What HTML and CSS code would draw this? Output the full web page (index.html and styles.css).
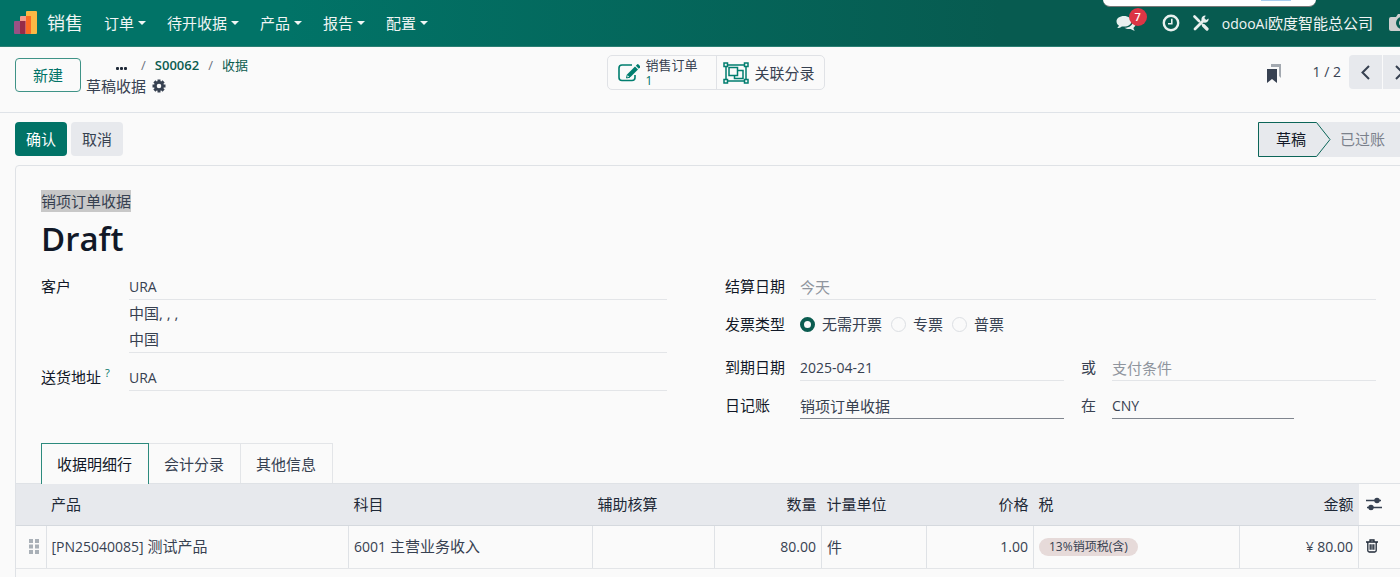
FILE: index.html
```html
<!DOCTYPE html>
<html lang="zh-CN">
<head>
	<meta charset="UTF-8">
	<title>草稿收据</title>
	<link rel="stylesheet" href="styles.css">
</head>
<body>
<div class="popup"><span></span></div>
<div class="client">
	<header class="navbar">
		<svg class="logo" width="24" height="24" viewBox="0 0 24 24">
			<rect x="12" y="0" width="11" height="23" rx="1" fill="#fbb945"/>
			<rect x="6" y="5" width="11" height="18" rx="1" fill="#f59b8c"/>
			<path d="M12 5h5v17q0 1-1 1h-4z" fill="#fc6a23"/>
			<rect x="0" y="10" width="11" height="13" rx="1" fill="#985184"/>
			<path d="M6 10h5.500v13h-4.500q-1 0-1-1z" fill="#962b48"/>
		</svg>
		<a class="app" href="#">销售</a>
		<nav class="menu">
			<button type="button">订单<i class="caret"></i></button>
			<button type="button">待开收据<i class="caret"></i></button>
			<button type="button">产品<i class="caret"></i></button>
			<button type="button">报告<i class="caret"></i></button>
			<button type="button">配置<i class="caret"></i></button>
		</nav>
		<div class="systray">
			<button type="button" class="chat" aria-label="消息">
				<svg width="20" height="17" viewBox="0 0 20 17" fill="#e8f0ee">
					<path d="M8 1c4.300 0 7.500 2.300 7.500 5.300s-3.200 5.300-7.500 5.300c-.8 0-1.500 0-2.200-.2C4.500 12.400 3 13 1.200 13.100c.9-.8 1.500-1.600 1.700-2.500C1.300 9.600.5 8 .5 6.300.5 3.300 3.700 1 8 1z"/>
					<path d="M17 5.500c1.500.9 2.500 2.200 2.500 3.800 0 1.400-.8 2.700-2.100 3.600.2 1 .7 1.800 1.500 2.600-1.700-.1-3.100-.7-4.300-1.600-2.200.4-4.500 0-6.100-1.100 5 0 8.800-2.700 8.500-7.300z"/>
				</svg>
				<span class="badge">7</span>
			</button>
			<button type="button" aria-label="活动">
				<svg width="18" height="18" viewBox="0 0 18 18" fill="none" stroke="#e8f0ee">
					<circle cx="9" cy="9" r="7.200" stroke-width="2.400"/>
					<path d="M9.800 4.800v5H6" stroke-width="1.600"/>
				</svg>
			</button>
			<button type="button" class="tools" aria-label="开发者工具">
				<svg width="16" height="16" viewBox="0 0 16 16" fill="none" stroke="#e8f0ee" stroke-linecap="round">
					<path d="M1.500 1.500l4.500 4.500" stroke-width="2.600"/>
					<path d="M6 6l3.500 3.500" stroke-width="1.400"/>
					<path d="M10.500 10.500l3.500 3.500" stroke-width="3.200"/>
					<path d="M2 14l8.500-8.500" stroke-width="2.800"/>
					<path d="M12.800.700a3.600 3.600 0 1 0 2.700 2.700l-2.300 1.600-1.900-1.900z" fill="#e8f0ee" stroke="none"/>
				</svg>
			</button>
			<a class="company" href="#"><span class="latin">odooAi</span>欧度智能总公司</a>
			<svg class="avatar" width="27" height="20" viewBox="0 0 27 20">
				<path d="M2 4h5l2-3h9l2 3h5q2 0 2 2v10q0 2-2 2H2q-2 0-2-2V6q0-2 2-2z" fill="#cfcfcf"/>
				<circle cx="13" cy="10" r="6" fill="#075b50"/>
				<circle cx="13" cy="10" r="3" fill="#cfcfcf"/>
			</svg>
		</div>
	</header>

	<section class="control-panel">
		<div class="cp-left">
			<button type="button" class="btn btn-outline">新建</button>
			<div class="crumbs">
				<ol>
					<li><a href="#" class="dots" aria-label="更多"><i></i><i></i><i></i></a></li>
					<li><a href="#" class="strong">S00062</a></li>
					<li><a href="#">收据</a></li>
				</ol>
				<div class="current">草稿收据
					<svg width="14" height="14" viewBox="0 0 14 14">
						<g stroke="#374151" stroke-width="3"><path d="M7 .5v13M.5 7h13M2.400 2.400l9.200 9.200M2.400 11.600l9.200-9.200"/></g>
						<circle cx="7" cy="7" r="3.600" fill="#fafafa" stroke="#374151" stroke-width="2.600"/>
					</svg>
				</div>
			</div>
		</div>
		<div class="stats">
			<button type="button" class="stat">
				<svg width="22" height="19" viewBox="0 0 22 19" fill="none" stroke="#017e6f" stroke-width="1.600">
					<path d="M14 2H4Q1 2 1 5v9.500q0 3 3 3h10q3 0 3-3V12"/>
					<path d="M9.500 11l7.500-7.500 3 3-7.500 7.500-3.500.5z" fill="#017e6f" stroke="none"/>
					<path d="M17.800 2.700l1.500-1.500q.5-.5 1 0l2 2q.4.500 0 1l-1.500 1.500z" fill="#017e6f" stroke="none"/>
					<path d="M9.300 11.500l2.700 2.700-3.500.8z" stroke-width="1" fill="#fafafa"/>
				</svg>
				<span class="stat-text"><span>销售订单</span><span class="value">1</span></span>
			</button>
			<button type="button" class="stat stat-wide">
				<svg width="26" height="22" viewBox="0 0 26 22" fill="none" stroke="#017e6f" stroke-width="1.500">
					<path d="M3 3h20v16H3z"/>
					<path d="M6 5.500h8.500v8H6z"/>
					<path d="M15 8.500h5v8h-8.500v-3"/>
					<path d="M1 1h3.500v3.500H1zM21.500 1H25v3.500h-3.500zM1 17.500h3.500V21H1zM21.500 17.500H25V21h-3.500z" fill="#fafafa"/>
				</svg>
				<span>关联分录</span>
			</button>
		</div>
		<div class="cp-right">
			<svg class="bookmark" width="14" height="19" viewBox="0 0 14 19">
				<path d="M4 0h10v14l-2-2V3H4z" fill="#a3a9b0"/>
				<path d="M0 5h10v14l-5-4-5 4z" fill="#374151"/>
			</svg>
			<span class="pager">1 / 2</span>
			<div class="pager-buttons">
				<button type="button" aria-label="上一页"><svg width="9" height="15" viewBox="0 0 9 15"><path d="M8 1L1.500 7.500 8 14"/></svg></button>
				<button type="button" aria-label="下一页"><svg width="9" height="15" viewBox="0 0 9 15"><path d="M1 1l6.500 6.500L1 14"/></svg></button>
			</div>
		</div>
	</section>

	<main>
		<div class="statusbar">
			<button type="button" class="btn btn-primary">确认</button>
			<button type="button" class="btn btn-secondary">取消</button>
			<div class="steps">
				<button type="button" class="step current-step">
					<svg width="73" height="35" viewBox="0 0 73 35"><path d="M.5.500h58L72 17.500 58.500 34.500H.500z" fill="#e7e9ed" stroke="#0b6558"/></svg>
					<span>草稿</span>
				</button>
				<button type="button" class="step">已过账</button>
			</div>
		</div>

		<form class="sheet">
			<div class="sheet-head">
				<span class="selected">销项订单收据</span>
				<h1>Draft</h1>
			</div>

			<div class="groups">
				<div class="group group-left">
					<label for="partner">客户</label>
					<div class="value-cell">
						<input id="partner" class="latin" type="text" value="URA">
						<div class="address">中国, , ,<br>中国</div>
					</div>
					<label for="shipping">送货地址<sup>?</sup></label>
					<input id="shipping" class="latin" type="text" value="URA">
				</div>
				<div class="group group-right">
					<label for="invoice-date">结算日期</label>
					<input id="invoice-date" type="text" placeholder="今天">
					<span class="label">发票类型</span>
					<div class="radios">
						<label><input type="radio" name="type" checked>无需开票</label>
						<label><input type="radio" name="type">专票</label>
						<label><input type="radio" name="type">普票</label>
					</div>
					<label for="due">到期日期</label>
					<div class="pair">
						<input id="due" class="latin" type="text" value="2025-04-21">
						<label for="term">或</label>
						<input id="term" type="text" placeholder="支付条件">
					</div>
					<label for="journal">日记账</label>
					<div class="pair">
						<input id="journal" class="required" type="text" value="销项订单收据">
						<label for="currency">在</label>
						<input id="currency" class="required short latin" type="text" value="CNY">
					</div>
				</div>
			</div>

			<div class="tabs">
				<button type="button" class="active">收据明细行</button>
				<button type="button">会计分录</button>
				<button type="button">其他信息</button>
			</div>

			<table>
				<colgroup>
					<col class="c-handle"><col><col class="c-account"><col class="c-aux"><col class="c-num">
					<col class="c-unit"><col class="c-num"><col class="c-tax"><col class="c-amount"><col class="c-tools">
				</colgroup>
				<thead>
					<tr>
						<th></th>
						<th>产品</th>
						<th>科目</th>
						<th>辅助核算</th>
						<th class="right">数量</th>
						<th>计量单位</th>
						<th class="right">价格</th>
						<th>税</th>
						<th class="right">金额</th>
						<th class="tools-cell">
							<svg width="16" height="14" viewBox="0 0 16 14" fill="#374151" stroke="#374151" stroke-width="1.500">
								<path d="M0 3.500h15M1 10.500h15"/><circle cx="11" cy="3.500" r="2"/><circle cx="5" cy="10.500" r="2"/>
							</svg>
						</th>
					</tr>
				</thead>
				<tbody>
					<tr>
						<td class="handle">
							<svg width="10" height="15" viewBox="0 0 10 15" fill="#a9b0b7">
								<path d="M0 0h4v4H0zM6 0h4v4H6zM0 5.500h4v4H0zM6 5.500h4v4H6zM0 11h4v4H0zM6 11h4v4H6z"/>
							</svg>
						</td>
						<td><span class="latin">[PN25040085]</span> 测试产品</td>
						<td><span class="latin">6001</span> 主营业务收入</td>
						<td></td>
						<td class="right latin">80.00</td>
						<td>件</td>
						<td class="right latin">1.00</td>
						<td><span class="tag">13%销项税(含)</span></td>
						<td class="right latin">¥ 80.00</td>
						<td class="tools-cell">
							<button type="button" aria-label="删除">
								<svg width="12" height="14" viewBox="0 0 12 14" fill="none" stroke="#1f2937" stroke-width="1.300">
									<path d="M0 3h12M4 3V1h4v2M1.800 3v8.500q0 1.500 1.500 1.500h5.400q1.500 0 1.500-1.500V3M4.200 5.300v5.500M6 5.300v5.500M7.800 5.300v5.500"/>
								</svg>
							</button>
						</td>
					</tr>
				</tbody>
			</table>
		</form>
	</main>
</div>
</body>
</html>
```
FILE: styles.css
```css
* {
	box-sizing: border-box;
}

body {
	margin: 0;
	overflow: hidden;
	background: #fafafa;
	color: #374151;
	font: 15px/22px "Open Sans", "Noto Sans CJK SC", sans-serif;
}

button, input {
	font: inherit;
	color: inherit;
}

button {
	margin: 0;
	padding: 0;
	border: 0;
	background: none;
}

a {
	color: #0b5c50;
	text-decoration: none;
}

svg {
	display: block;
	flex: none;
}

/* the client runs a little past the right edge of the window */
.client {
	width: calc(100% + 31px);
}

.latin {
	font-size: 14px;
}

.popup {
	position: absolute;
	top: 0;
	right: 84px;
	width: 213px;
	height: 7px;
	background: #fff;
	border-bottom: 1px solid #777;
	border-radius: 0 0 9px 9px;
}

.popup span {
	display: block;
	width: 30px;
	height: 1px;
	margin-left: 158px;
	background: #a9cdee;
}

/* navbar */
.navbar {
	display: flex;
	align-items: center;
	height: 47px;
	padding: 0 15px 0 14px;
	background: linear-gradient(90deg, #017367 20%, #075b50 70%);
	border-bottom: 1px solid #2b7f73;
	color: #f0f5f4;
}

.navbar a {
	color: #f0f5f4;
}

.app {
	margin: 0 21px 0 9px;
	font-size: 18px;
}

.menu {
	display: flex;
	gap: 21px;
}

.menu button {
	display: flex;
	align-items: center;
	gap: 4px;
}

.caret {
	border: 4px solid transparent;
	border-top-color: #f0f5f4;
	border-bottom: 0;
}

.systray {
	display: flex;
	align-items: center;
	margin-left: auto;
}

.chat {
	position: relative;
	margin-right: 26px;
}

.badge {
	position: absolute;
	top: -7px;
	left: 13px;
	width: 18px;
	height: 18px;
	border-radius: 9px;
	background: #dc3545;
	color: #fff;
	font-size: 11px;
	font-weight: 600;
	line-height: 18px;
	text-align: center;
}

.tools {
	margin: 0 13px;
}

.avatar {
	margin-left: 16px;
}

/* control panel */
.control-panel {
	display: grid;
	grid-template-columns: 1fr auto 1fr;
	height: 66px;
	padding: 8px 15px 0;
	border-bottom: 1px solid #dfe3e8;
}

.cp-left, .cp-right {
	display: flex;
	align-items: flex-start;
}

.btn {
	height: 34px;
	padding: 0 11px;
	border-radius: 4px;
}

.btn-outline {
	margin-top: 3px;
	padding: 0 17px;
	border: 1px solid #3f9387;
	color: #017367;
}

.btn-primary {
	background: #017367;
	color: #fff;
}

.btn-secondary {
	background: #e7e9ed;
}

.crumbs {
	margin-left: 5px;
}

.crumbs ol {
	display: flex;
	margin: 0;
	padding: 0 0 0 30px;
	list-style: none;
	font-size: 13px;
	line-height: 20px;
}

.crumbs li + li::before {
	content: "/";
	margin: 0 9px;
	color: #6b7280;
}

.crumbs li:nth-child(2)::before {
	margin-left: 14px;
}

.strong {
	font-weight: 600;
}

.dots {
	display: inline-flex;
	gap: 1px;
}

.dots i {
	width: 3px;
	height: 3px;
	border-radius: 1px;
	background: #1f2937;
}

.current {
	display: flex;
	align-items: center;
	gap: 6px;
	line-height: 22px;
}

.stats {
	display: flex;
	height: 35px;
	border: 1px solid #e0e2e6;
	border-radius: 5px;
}

.stat {
	display: flex;
	align-items: center;
	gap: 6px;
	width: 108px;
	padding-left: 10px;
}

.stat + .stat {
	border-left: 1px solid #e0e2e6;
}

.stat-wide {
	padding-left: 6px;
}

.stat-text {
	display: flex;
	flex-direction: column;
	font-size: 13px;
	line-height: 15px;
	text-align: left;
}

.value {
	color: #017367;
	font-size: 12px;
}

.cp-right {
	justify-content: flex-end;
	line-height: 34px;
}

.bookmark {
	margin: 9px 32px 0 0;
}

.pager {
	margin-right: 8px;
	font-size: 14px;
}

.pager-buttons {
	display: flex;
	gap: 1px;
}

.pager-buttons button {
	display: grid;
	place-items: center;
	width: 33px;
	height: 34px;
	background: #e7e9ed;
	border-radius: 4px 0 0 4px;
}

.pager-buttons button + button {
	border-radius: 0 4px 4px 0;
}

.pager-buttons path {
	fill: none;
	stroke: #374151;
	stroke-width: 2;
}

/* status bar */
main {
	padding: 8px 15px 0;
}

.statusbar {
	display: flex;
	align-items: center;
	gap: 4px;
	height: 36px;
}

.steps {
	display: flex;
	margin-left: auto;
}

.step {
	height: 35px;
	padding: 0 31px 0 23px;
	background: #e7e9ed;
	color: #7b818c;
}

.current-step {
	display: grid;
	place-items: center start;
	margin-right: -14px;
	padding: 0;
	background: none;
	color: #111827;
	z-index: 1;
}

.current-step > * {
	grid-area: 1 / 1;
}

.current-step span {
	margin-left: 18px;
}

/* form sheet */
.sheet {
	min-height: 440px;
	margin-top: 8px;
	border: 1px solid #dfe2e6;
	border-radius: 4px 4px 0 0;
}

.sheet-head {
	padding: 24px 25px 0;
}

.selected {
	display: inline-block;
	background: #c8c8c8;
}

h1 {
	margin: 5px 0 13px;
	color: #111827;
	font-size: 33px;
	font-weight: 600;
	line-height: 44px;
}

.groups {
	display: grid;
	grid-template-columns: 626fr 651fr;
	align-items: start;
	gap: 58px;
	padding: 0 39px 24px 25px;
}

.group {
	display: grid;
	grid-template-columns: 88px 1fr;
	row-gap: 12px;
	line-height: 25px;
}

.group-right {
	grid-template-columns: 75px 1fr;
}

.group > label, .label {
	color: #111827;
}

.group sup {
	margin-left: 4px;
	color: #017367;
	font-size: 11px;
	line-height: 0;
}

.group input[type=text] {
	display: block;
	width: 100%;
	min-width: 0;
	height: 26px;
	padding: 0;
	border: 0;
	border-bottom: 1px solid #e3e5e8;
	background: none;
}

.group input.required {
	border-color: #7f858e;
}

.group input::placeholder {
	color: #8f959e;
	opacity: 1;
}

.address {
	border-bottom: 1px solid #e3e5e8;
	line-height: 26px;
}

.radios {
	display: flex;
	gap: 9px;
	margin-bottom: 6px;
}

.radios label {
	display: flex;
	align-items: center;
	gap: 7px;
}

.radios input {
	appearance: none;
	width: 15px;
	height: 15px;
	margin: 0;
	border: 1px solid #dcdfe3;
	border-radius: 50%;
}

.radios input:checked {
	border: 4px solid #0b5c50;
}

.pair {
	display: grid;
	grid-template-columns: 1fr 48px 1fr;
}

.pair label {
	padding-left: 17px;
}

.group .pair input.short {
	width: 182px;
}

/* notebook */
.tabs {
	display: flex;
	padding-left: 25px;
	border-bottom: 1px solid #dfe2e6;
}

.tabs button {
	height: 40px;
	padding: 0 16px 0 15px;
	border: 1px solid #e3e5e8;
	border-width: 1px 1px 0 0;
}

.tabs .active {
	margin-bottom: -1px;
	height: 41px;
	border: 1px solid #2c8a7d;
	border-bottom: 0;
	background: #fafafa;
	color: #111827;
}

table {
	width: 100%;
	table-layout: fixed;
	border-collapse: collapse;
}

.c-handle { width: 30px; }
.c-account { width: 244px; }
.c-aux { width: 122px; }
.c-num { width: 107px; }
.c-unit { width: 105px; }
.c-tax { width: 206px; }
.c-amount { width: 119px; }
.c-tools { width: 56px; }

th, td {
	height: 41px;
	padding: 0 5px;
	border-bottom: 1px solid #e3e5e8;
	text-align: left;
	white-space: nowrap;
}

th {
	background: #e7e9ed;
	border-bottom-color: #d5d9de;
	color: #1f2937;
	font-weight: 400;
}

td {
	height: 43px;
	border-right: 1px solid #dfe2e6;
}

.right {
	text-align: right;
}

.handle {
	padding-left: 13px;
}

.tag {
	display: block;
	width: fit-content;
	padding: 0 10px;
	border-radius: 9px;
	background: #e6dad9;
	font-size: 12px;
	line-height: 18px;
}

.tools-cell {
	padding-left: 7px;
	background: #fafafa;
}
```
